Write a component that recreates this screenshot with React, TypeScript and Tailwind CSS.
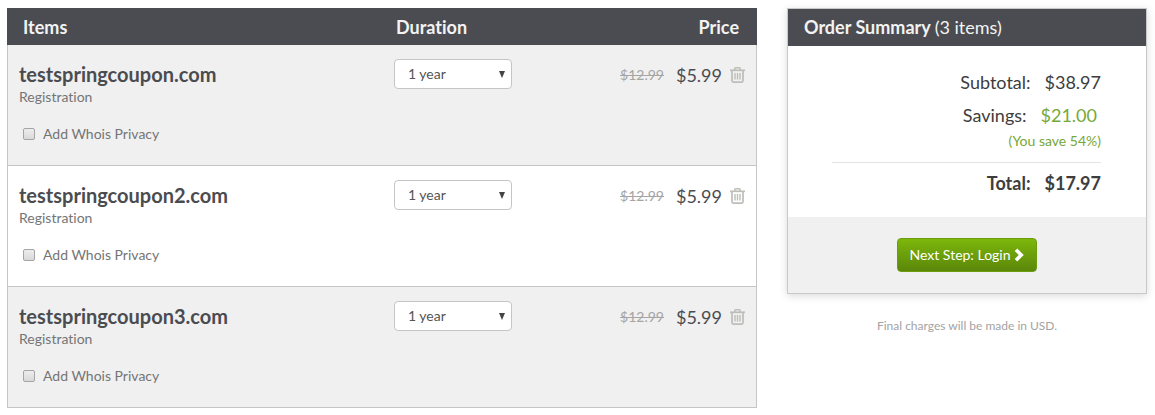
import React, { useState } from 'react'

type CartItem = {
  domain: string,
  kind: string,
  oldPrice: string,
  price: string,
}

const items: CartItem[] = [
  { domain: "testspringcoupon.com", kind: "Registration", oldPrice: "$12.99", price: "$5.99" },
  { domain: "testspringcoupon2.com", kind: "Registration", oldPrice: "$12.99", price: "$5.99" },
  { domain: "testspringcoupon3.com", kind: "Registration", oldPrice: "$12.99", price: "$5.99" },
]

export default function App() {
  return (
    <div className="flex items-start gap-[30px] bg-white py-2 pr-2 pl-[7px] text-[#4b4c50]
      [font-variant-ligatures:none] font-[Lato,'Open_Sans',sans-serif]">
      <CartTable/>
      <aside className="w-[360px] shrink-0">
        <OrderSummary/>
        <p className="mt-6 text-center text-xs leading-4 text-[#a3a3a3]">
          Final charges will be made in USD.
        </p>
      </aside>
    </div>
  )
}

function CartTable() {
  return (
    <table className="min-w-0 flex-1 table-fixed border-separate border-spacing-0 text-left">
      <thead className="bg-[#4b4c51] text-lg leading-5 text-[#f3f3f3]">
        <tr>
          <th className="h-[37px] w-1/2 pl-4 font-bold">Items</th>
          <th className="w-1/4 pl-[14px] font-bold">Duration</th>
          <th className="w-1/4 pr-[18px] text-right font-bold">Price</th>
        </tr>
      </thead>
      <tbody>
        {items.map(item=> <CartRow key={item.domain} item={item}/>)}
      </tbody>
    </table>
  )
}

function CartRow(props: {item: CartItem}) {
  const { item } = props
  const [privacy, setPrivacy] = useState(false)
  const [duration, setDuration] = useState("1")

  return (
    <tr className="align-top odd:bg-[#f0f0f0]">
      <td className="border-b border-l border-[#c5c5c5] pt-[17px] pb-[21px] pl-[11px]">
        <h2 className="text-xl leading-6 font-bold">{item.domain}</h2>
        <p className="text-sm leading-[22px] text-[#757575]">{item.kind}</p>
        <label className="mt-4 flex items-center gap-2 pl-1 text-sm leading-5 text-[#757575]">
          <input type="checkbox" checked={privacy} onChange={e=> setPrivacy(e.target.checked)}
            className="size-3 appearance-none rounded-xs border border-[#a5a5a5] bg-linear-to-b
              from-[#ededed] to-[#d9d9d9] checked:bg-[#7ab30a]"/>
          Add Whois Privacy
        </label>
      </td>
      <td className="border-b border-[#c5c5c5] pt-[14px] pl-3">
        <div className="relative w-[118px]">
          <select aria-label="Duration" value={duration} onChange={e=> setDuration(e.target.value)}
            className="h-[30px] w-full appearance-none rounded-sm border border-[#c5c5c5] bg-white
              pl-[13px] text-sm text-[#555]">
            <option value="1">1 year</option>
            <option value="2">2 years</option>
            <option value="5">5 years</option>
          </select>
          <svg viewBox="0 0 6 7" className="pointer-events-none absolute top-3 right-[7px] h-[7px] w-[6px]">
            <path d="M0 0h6L3 7z" fill="#444"/>
          </svg>
        </div>
      </td>
      <td className="border-r border-b border-[#c5c5c5] pt-[18px] pr-[11px]">
        <div className="flex items-center justify-end">
          <s className="mr-3 text-sm leading-6 text-[#a5a5a5]">{item.oldPrice}</s>
          <span className="mr-2 text-lg leading-6">{item.price}</span>
          <button aria-label={"Remove " + item.domain} className="cursor-pointer text-[#bdbdb9]">
            <TrashIcon/>
          </button>
        </div>
      </td>
    </tr>
  )
}

function TrashIcon() {
  return (
    <svg viewBox="0 0 15 16" className="block h-4 w-[15px]" fill="none" stroke="currentColor">
      <path d="M0 3.3h15" strokeWidth="1.7"/>
      <path d="M4.8 3V1.7q0-.9.9-.9h3.6q.9 0 .9.9V3" strokeWidth="1.5"/>
      <path d="M2 3.5v10.3q0 1.3 1.3 1.3h8.4q1.3 0 1.3-1.3V3.5" strokeWidth="1.7"/>
      <path d="M5 6v6.5M7.5 6v6.5M10 6v6.5" strokeWidth="1.4"/>
    </svg>
  )
}

function OrderSummary() {
  return (
    <section className="border border-[#c9c9c9] shadow-[0_2px_8px_rgba(0,0,0,0.15)]">
      <h2 className="bg-[#4b4c51] px-4 py-2 text-lg leading-[21px] font-bold text-[#f3f3f3]">
        Order Summary <span className="font-normal">(3 items)</span>
      </h2>
      <div className="bg-white pt-5 pr-[45px] pb-[17px] pl-11 text-right text-lg text-[#3d3d3d]">
        <SummaryLine label="Subtotal:" value="$38.97"/>
        <div className="pr-1 text-[#77a838]">
          <SummaryLine label="Savings:" value="$21.00"/>
        </div>
        <p className="text-sm leading-[18px] text-[#77a838]">(You save 54%)</p>
        <div className="mt-3 border-t border-[#e3e3e3] pt-1 font-bold">
          <SummaryLine label="Total:" value="$17.97"/>
        </div>
      </div>
      <div className="flex justify-center bg-[#f0f0f0] py-[21px]">
        <button className="flex h-[34px] cursor-pointer items-center gap-1 rounded-sm border
          border-[#6a9c0c] bg-linear-to-b from-[#7db70b] to-[#5b870a] px-3 text-sm text-white">
          Next Step: Login
          <svg viewBox="0 0 10 14" className="h-[14px] w-[10px]" fill="none">
            <path d="M2 1.8 7.2 7 2 12.2" stroke="white" strokeWidth="3.6"/>
          </svg>
        </button>
      </div>
    </section>
  )
}

function SummaryLine(props: {label: string, value: string}) {
  return (
    <div className="flex justify-end gap-[14px] leading-[33px]">
      <span className="text-[#3d3d3d]">{props.label}</span>
      <span>{props.value}</span>
    </div>
  )
}
